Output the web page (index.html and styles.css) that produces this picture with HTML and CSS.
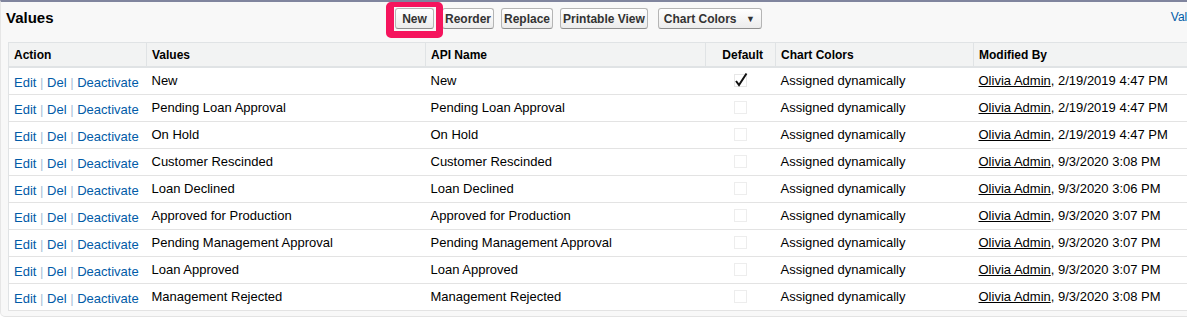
FILE: index.html
```html
<!DOCTYPE html>
<html lang="en">
<head>
  <meta charset="UTF-8" />
  <title>Values</title>
  <link rel="stylesheet" href="styles.css">
</head>
<body>

  <div class="panel">
    <div class="panel-head">
      <h3>Values</h3>
      <div class="buttons">
        <button class="btn btn-new">New</button>
        <button class="btn">Reorder</button>
        <button class="btn">Replace</button>
        <button class="btn">Printable View</button>
        <button class="btn btn-menu">Chart Colors <span class="caret">&#9660;</span></button>
      </div>
      <a class="help" href="#">Values Help</a>
      <div class="highlight"></div>
    </div>

    <table class="list">
      <colgroup>
        <col style="width:138px">
        <col style="width:279px">
        <col style="width:280px">
        <col style="width:70px">
        <col style="width:198px">
        <col style="width:240px">
      </colgroup>
      <thead>
        <tr>
          <th>Action</th>
          <th>Values</th>
          <th>API Name</th>
          <th class="right">Default</th>
          <th>Chart Colors</th>
          <th>Modified By</th>
        </tr>
      </thead>
      <tbody id="rows"></tbody>
    </table>
  </div>

<script>
const rows = [
  ["New", true, "2/19/2019 4:47 PM"],
  ["Pending Loan Approval", false, "2/19/2019 4:47 PM"],
  ["On Hold", false, "2/19/2019 4:47 PM"],
  ["Customer Rescinded", false, "9/3/2020 3:08 PM"],
  ["Loan Declined", false, "9/3/2020 3:06 PM"],
  ["Approved for Production", false, "9/3/2020 3:07 PM"],
  ["Pending Management Approval", false, "9/3/2020 3:07 PM"],
  ["Loan Approved", false, "9/3/2020 3:07 PM"],
  ["Management Rejected", false, "9/3/2020 3:08 PM"]
];

const box = '<svg class="chk" width="16" height="16" viewBox="0 0 16 16"><rect x="1.5" y="2.5" width="12" height="12" fill="#fff" stroke="#dadada" stroke-dasharray="1 1"/></svg>';
const tick = '<svg class="chk" width="16" height="16" viewBox="0 0 16 16"><rect x="1.5" y="2.5" width="12" height="12" fill="#fff" stroke="#cfcfcf" stroke-dasharray="1 1"/><path d="M3 9 L6 13 L13.5 1.5" fill="none" stroke="#111" stroke-width="2"/></svg>';

const tbody = document.getElementById("rows");
rows.forEach(r => {
  const tr = document.createElement("tr");
  tr.innerHTML =
    '<td class="actions"><a href="#">Edit</a> <span class="sep">|</span> <a href="#">Del</a> <span class="sep">|</span> <a href="#">Deactivate</a></td>' +
    '<td>' + r[0] + '</td>' +
    '<td>' + r[0] + '</td>' +
    '<td class="center">' + (r[1] ? tick : box) + '</td>' +
    '<td>Assigned dynamically</td>' +
    '<td><a class="user" href="#">Olivia Admin</a>, ' + r[2] + '</td>';
  tbody.appendChild(tr);
});
</script>

</body>
</html>
```

FILE: styles.css
```css
html, body {
  margin: 0;
  overflow: hidden;
  background: #fff;
}
body {
  font-family: "Liberation Sans", Arial, sans-serif;
  font-size: 13px;
  color: #000;
  width: 1187px;
  height: 325px;
}
.panel {
  border-top: 2px solid #80859e;
  background: #f8f8f8;
  border-left: 1px solid #e6e6e6;
  border-bottom: 1px solid #e3e3e3;
  border-radius: 0 0 0 5px;
  padding: 0 0 5px 7px;
  width: 1220px;
}
.panel-head {
  position: relative;
  height: 40px;
  display: flex;
  align-items: flex-start;
}
.panel-head h3 {
  flex: none;
  margin: 7px 0 0 -2px;
  font-size: 15px;
  font-weight: bold;
  width: 389px;
}
.buttons {
  flex: none;
  display: flex;
  gap: 7px;
  margin-top: 6px;
}
.btn {
  font-family: "Liberation Sans", Arial, sans-serif;
  font-size: 12px;
  font-weight: bold;
  color: #333;
  height: 21px;
  padding: 0 2px;
  white-space: nowrap;
  background: linear-gradient(#ffffff, #ececec);
  border: 1px solid #b5b5b5;
  border-bottom-color: #8f8f8f;
  border-radius: 3px;
}
.btn-new {
  min-width: 39px;
  margin-right: 1px;
}
.btn-menu {
  padding: 0 6px 0 5px;
  margin-left: 3px;
}
.caret {
  font-size: 9px;
  margin-left: 6px;
  vertical-align: 1px;
}
.help {
  flex: none;
  color: #015ba7;
  text-decoration: none;
  font-size: 12px;
  margin: 8px 0 0 409px;
  white-space: nowrap;
}
.highlight {
  position: absolute;
  left: 378px;
  top: 0;
  width: 42px;
  height: 24px;
  border-style: solid;
  border-color: #f5145d;
  border-width: 5px 7px 7px 8px;
  border-radius: 5px;
}
.list {
  border-collapse: collapse;
  table-layout: fixed;
  width: 1205px;
  background: #fff;
  border: 1px solid #e0e3e5;
}
.list th {
  background: #f2f3f3;
  font-size: 12px;
  font-weight: bold;
  text-align: left;
  height: 23px;
  padding: 0 5px;
  border: 1px solid #e0e3e5;
  border-bottom-width: 2px;
}
.list th.right {
  text-align: right;
  padding-right: 12px;
}
.list td {
  height: 24px;
  padding: 0 5px 2px 5px;
  border-bottom: 1px solid #e3e3e3;
  white-space: nowrap;
  overflow: hidden;
}
.list td.actions {
  padding-top: 2px;
  padding-bottom: 0;
}
.list td.center {
  padding: 0 0 2px 27px;
}
.chk {
  display: block;
}
.list a {
  color: #015ba7;
  text-decoration: none;
}
.sep {
  color: #a9bfd6;
}
.list a.user {
  color: #000;
  text-decoration: underline;
}
```
